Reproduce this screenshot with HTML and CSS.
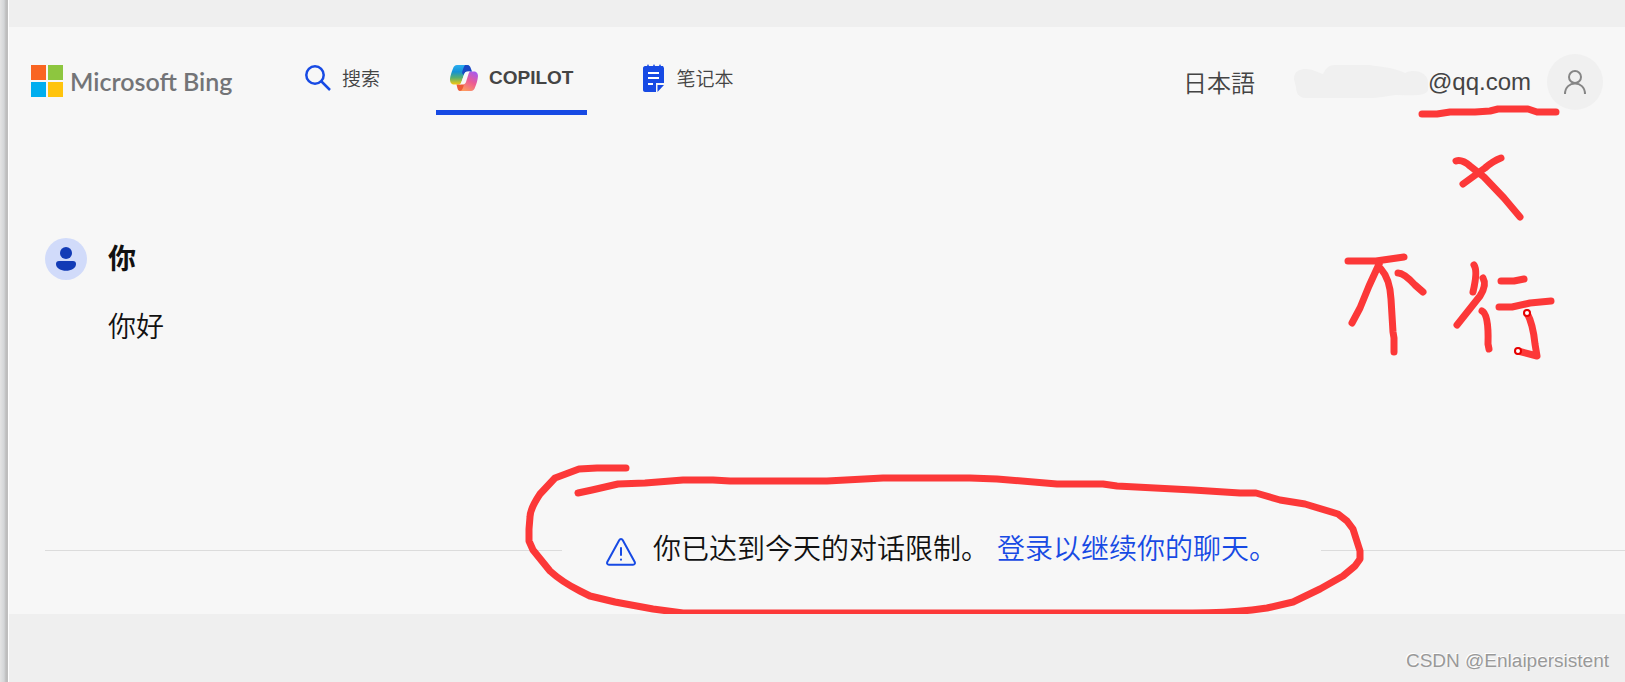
FILE: index.html
```html
<!DOCTYPE html>
<html lang="zh-CN">
<head>
    <meta charset="UTF-8">
    <meta name="viewport" content="width=device-width, initial-scale=1.0">
    <title>Microsoft Bing - Copilot</title>
    <link rel="stylesheet" href="styles.css">
</head>
<body>
    <div class="page">
        <!-- Header -->
        <header class="header">
            <a class="logo" href="#">
                <svg width="32" height="32" viewBox="0 0 32 32" aria-hidden="true">
                    <path fill="#f96522" d="M0 0h15v15H0z"/>
                    <path fill="#8dc63f" d="M17 0h15v15H17z"/>
                    <path fill="#00aeef" d="M0 17h15v15H0z"/>
                    <path fill="#ffc40d" d="M17 17h15v15H17z"/>
                </svg>
                <span class="logo-text">Microsoft Bing</span>
            </a>

            <nav class="tabs">
                <a class="tab" href="#">
                    <svg width="26" height="26" viewBox="0 0 26 26" fill="none" stroke="#174ae4" stroke-width="2.500" aria-hidden="true">
                        <circle cx="10" cy="10" r="8.700"/>
                        <path d="M16 16l9 9"/>
                    </svg>
                    <span>搜索</span>
                </a>
                <a class="tab tab-active" href="#">
                    <svg width="28" height="26" viewBox="0 0 28 26" aria-hidden="true">
                        <defs>
                            <linearGradient id="cpLeft" x1="0" y1="0" x2="0" y2="1">
                                <stop offset="0" stop-color="#2baef0"/>
                                <stop offset="0.35" stop-color="#1492d6"/>
                                <stop offset="0.65" stop-color="#57ae70"/>
                                <stop offset="1" stop-color="#f8c80e"/>
                            </linearGradient>
                            <linearGradient id="cpRight" x1="0.8" y1="0" x2="0.3" y2="1">
                                <stop offset="0" stop-color="#a55af0"/>
                                <stop offset="0.5" stop-color="#ec5b94"/>
                                <stop offset="1" stop-color="#fd9a60"/>
                            </linearGradient>
                        </defs>
                        <path fill="url(#cpLeft)" d="M7 0h12l-5 10-3 8c-.6 1-1.500 1.500-3 1.500H4c-3 0-4-2.500-4-5.500.3-3 1.500-7 3-10.500C3.700 1.500 5 0 7 0z"/>
                        <path fill="url(#cpRight)" d="M17 6.500h7c3 0 4 2.500 4 4.500-.3 4-1.500 8-3 11.500-.7 2-2 3.500-4 3.500H10l4-7z"/>
                        <path fill="#1a48c4" d="M15 0h2c2 0 3 1 3.500 2.500L22 6.500h-4c-2.500 0-3.500 1-4.500 3.500L12 8c.7-3 1.500-6 3-8z"/>
                        <path fill="#ee5a35" d="M14 19.500c-.8 3-2 6.500-4 6.500-1.500 0-2-1-2.500-2.500L6.500 19.500H9c1.500 0 2-.5 2.500-1.500z"/>
                        <path fill="#f7f7f7" d="M18.500 6.500c-2.700 0-3.800 1-4.500 3L11.500 17c-.5 1.500-1 2.500-2.500 2.500h3.500c2 0 3-1 3.500-2.500l2.500-8c.4-1.300.8-2 1.500-2.500z"/>
                    </svg>
                    <span>COPILOT</span>
                </a>
                <a class="tab" href="#">
                    <svg width="22" height="28" viewBox="0 0 22 28" aria-hidden="true">
                        <path fill="#174ae4" d="M2 2h2l1-2 1 2h4l1-2 1 2h4l1-2 1 2h2l1 2v15h-8v9H2c-1 0-2-1-2-2V4c0-1 1-2 2-2zM14.500 21H21l-6.500 7z"/>
                        <path stroke="#fff" stroke-width="2" fill="none" d="M5 9h11M5 14h11M5 20h5"/>
                    </svg>
                    <span>笔记本</span>
                </a>
            </nav>

            <div class="account">
                <a class="language" href="#" lang="ja">日本語</a>
                <div class="email">
                    <svg width="134" height="34" viewBox="0 0 134 34" fill="#f0f0f0" aria-hidden="true">
                        <path d="M0 14C0 6 6 4 12 4c6 0 11 3 17 5 3-6 6-9 12-9h35c9 2 23 2 35 8 10-5 23 0 23 9v8c-2 7-18 5-32 5-12 1-15 3-27 3H12c-8 0-10-6-10-11z"/>
                    </svg>
                    <span>@qq.com</span>
                </div>
                <button class="avatar-button" type="button" aria-label="Account">
                    <svg width="22" height="24" viewBox="0 0 22 24" fill="none" stroke="#868686" stroke-width="2" aria-hidden="true">
                        <circle cx="11" cy="7" r="6"/>
                        <path d="M1 24c0-14 20-14 20 0"/>
                    </svg>
                </button>
            </div>
        </header>

        <!-- Conversation -->
        <main class="chat">
            <section class="message">
                <svg class="user-icon" width="42" height="42" viewBox="0 0 42 42" aria-hidden="true">
                    <circle cx="21" cy="21" r="21" fill="#d1dbfa"/>
                    <circle cx="21" cy="15" r="6" fill="#123bb6"/>
                    <path fill="#123bb6" d="M14 23h14c2 0 3 1 3 3 0 9-20 9-20 0 0-2 1-3 3-3z"/>
                </svg>
                <h2 class="user-name">你</h2>
                <p class="message-text">你好</p>
            </section>

            <div class="limit">
                <span class="line line-left"></span>
                <div class="notice">
                    <svg class="warning" width="30" height="28" viewBox="0 0 30 28" fill="none" stroke="#174ae4" stroke-width="2" stroke-linejoin="round" stroke-linecap="round" aria-hidden="true">
                        <path d="M13.200 2.200c.8-1.500 2.800-1.500 3.600 0l11.800 21.600c.8 1.500 0 3-1.600 3H3c-1.600 0-2.400-1.500-1.600-3z"/>
                        <path d="M15 10v7M15 21.500v.2"/>
                    </svg>
                    <span>你已达到今天的对话限制。</span>
                    <a href="#">登录以继续你的聊天。</a>
                    <!-- Red ring drawn around the notice -->
                    <svg class="ink ring" width="850" height="155" viewBox="520 460 850 155" aria-hidden="true">
                        <path d="M626 469H597L579 470 555 479 540 495Q530 510 530 518L529 530V542L533 551 550 572Q562 583 580 592L590 597 615 603 653 610 683 614H1193Q1225 614 1252 611L1267 609 1293 603 1320 590 1343 577 1355 567 1360 560V552L1353 530 1347 522 1338 515 1305 505 1280 501 1256 494H1240L1193 491 1117 487 1103 485H1057L997 480 970 479H883L827 482H730L713 481H683L645 484 618 485 592 491 578 494"/>
                    </svg>
                </div>
                <span class="line line-right"></span>
            </div>
        </main>

        <!-- Red pen notes below the account -->
        <svg class="ink notes" width="260" height="270" viewBox="1340 100 260 270" aria-hidden="true">
            <path d="M1422 115H1437L1450 113H1475L1490 112 1498 110H1528L1537 113H1556"/>
            <path d="M1456 162Q1462 160 1470 167L1484 178 1504 199 1520 218M1501 159Q1493 162 1485 169L1463 185"/>
            <path d="M1348 262H1376L1390 260 1404 258M1380 263L1369 287 1360 309 1352 324M1381 270Q1390 280 1391 300L1393 333 1394 339V353M1398 274Q1404 274 1415 286L1423 293"/>
            <path d="M1474 266Q1478 272 1473 293M1483 279Q1487 286 1480 297L1457 326M1482 312Q1489 315 1488 345L1489 350"/>
            <path d="M1501 282H1514L1524 280M1499 308H1512L1530 304 1551 302M1527 314Q1533 325 1535 345L1537 357 1518 352"/>
            <g class="handle">
                <circle cx="1527" cy="314" r="3"/>
                <circle cx="1518" cy="352" r="3"/>
            </g>
        </svg>
    </div>

    <footer class="credit">CSDN @Enlaipersistent</footer>
</body>
</html>
```
FILE: styles.css
```css
* {
    box-sizing: border-box;
}
body {
    margin: 0;
    min-height: 100vh;
    display: flex;
    flex-direction: column;
    padding: 27px 0 0 9px;
    font-family: "Liberation Sans", "Noto Sans CJK SC", sans-serif;
    color: #111;
    background: linear-gradient(to right, #e4e4e4 0, #d4d6d8 4px, #bebebe 6px, #bebebe 8px, #fff 8px, #fff 9px, #efefef 9px);
    overflow-x: hidden;
}
a {
    color: inherit;
    text-decoration: none;
}
svg {
    flex-shrink: 0;
}
.page {
    position: relative;
    background-color: #f7f7f7;
}

/* header */
.header {
    display: flex;
    height: 88px;
    padding: 0 22px;
    color: #444;
    white-space: nowrap;
}
.logo {
    display: flex;
    align-items: center;
    gap: 7px;
    width: 260px;
    height: 107px;
}
.logo-text {
    font-family: Lato, sans-serif;
    font-size: 25px;
    font-weight: 600;
    color: #737477;
}
.tabs {
    display: flex;
    gap: 42px;
    font-size: 19px;
    font-weight: 350;
}
.tab {
    display: flex;
    align-items: center;
    gap: 11px;
    padding: 18px 14px 0;
    border-bottom: 5px solid transparent;
}
.tab-active {
    border-color: #174ae4;
    font-weight: 700;
}
.account {
    display: flex;
    align-items: center;
    gap: 16px;
    margin-left: auto;
    height: 110px;
    font-size: 24px;
}
.language {
    margin-right: 23px;
    font-family: "Noto Sans CJK JP", sans-serif;
    font-weight: 350;
    line-height: 32px;
}
.email {
    display: flex;
    align-items: center;
}
.avatar-button {
    display: flex;
    align-items: center;
    justify-content: center;
    width: 56px;
    height: 56px;
    border: none;
    border-radius: 50%;
    background-color: #f0f0f0;
    cursor: pointer;
}

/* conversation */
.chat {
    padding: 121px 0 42px 36px;
    font-size: 28px;
    line-height: 44px;
}
.message {
    display: grid;
    grid-template-columns: 42px 1fr;
    column-gap: 21px;
    row-gap: 22px;
}
.user-icon {
    margin-top: 2px;
}
.user-name, .message-text {
    margin: 0;
    padding-top: 2px;
    font-size: 28px;
}
.message-text {
    grid-column: 2;
    font-weight: 350;
}
.limit {
    display: flex;
    align-items: center;
    margin-top: 178px;
}
.line {
    height: 1px;
    background-color: #dcdcdc;
}
.line-left {
    flex: 17;
}
.line-right {
    flex: 10;
}
.notice {
    position: relative;
    display: flex;
    align-items: center;
    padding: 0 44px;
    font-weight: 350;
    white-space: nowrap;
}
.notice a {
    margin-left: 8px;
    color: #174ae4;
}
.warning {
    margin: 4px 17px 0 0;
}

/* red pen */
.ink {
    position: absolute;
    fill: none;
    stroke: #fc3838;
    stroke-width: 7px;
    stroke-linecap: round;
    stroke-linejoin: round;
    pointer-events: none;
}
.ring {
    left: -42px;
    bottom: -42px;
}
.notes {
    right: 25px;
    top: 72px;
}
.handle {
    fill: #fff;
    stroke: #e60000;
    stroke-width: 2px;
}

.credit {
    flex: 1;
    padding: 36px 16px 10px 0;
    text-align: right;
    font-size: 19px;
    line-height: 21px;
    color: #999;
    text-shadow: -1px -1px 0 #fff;
}
```
